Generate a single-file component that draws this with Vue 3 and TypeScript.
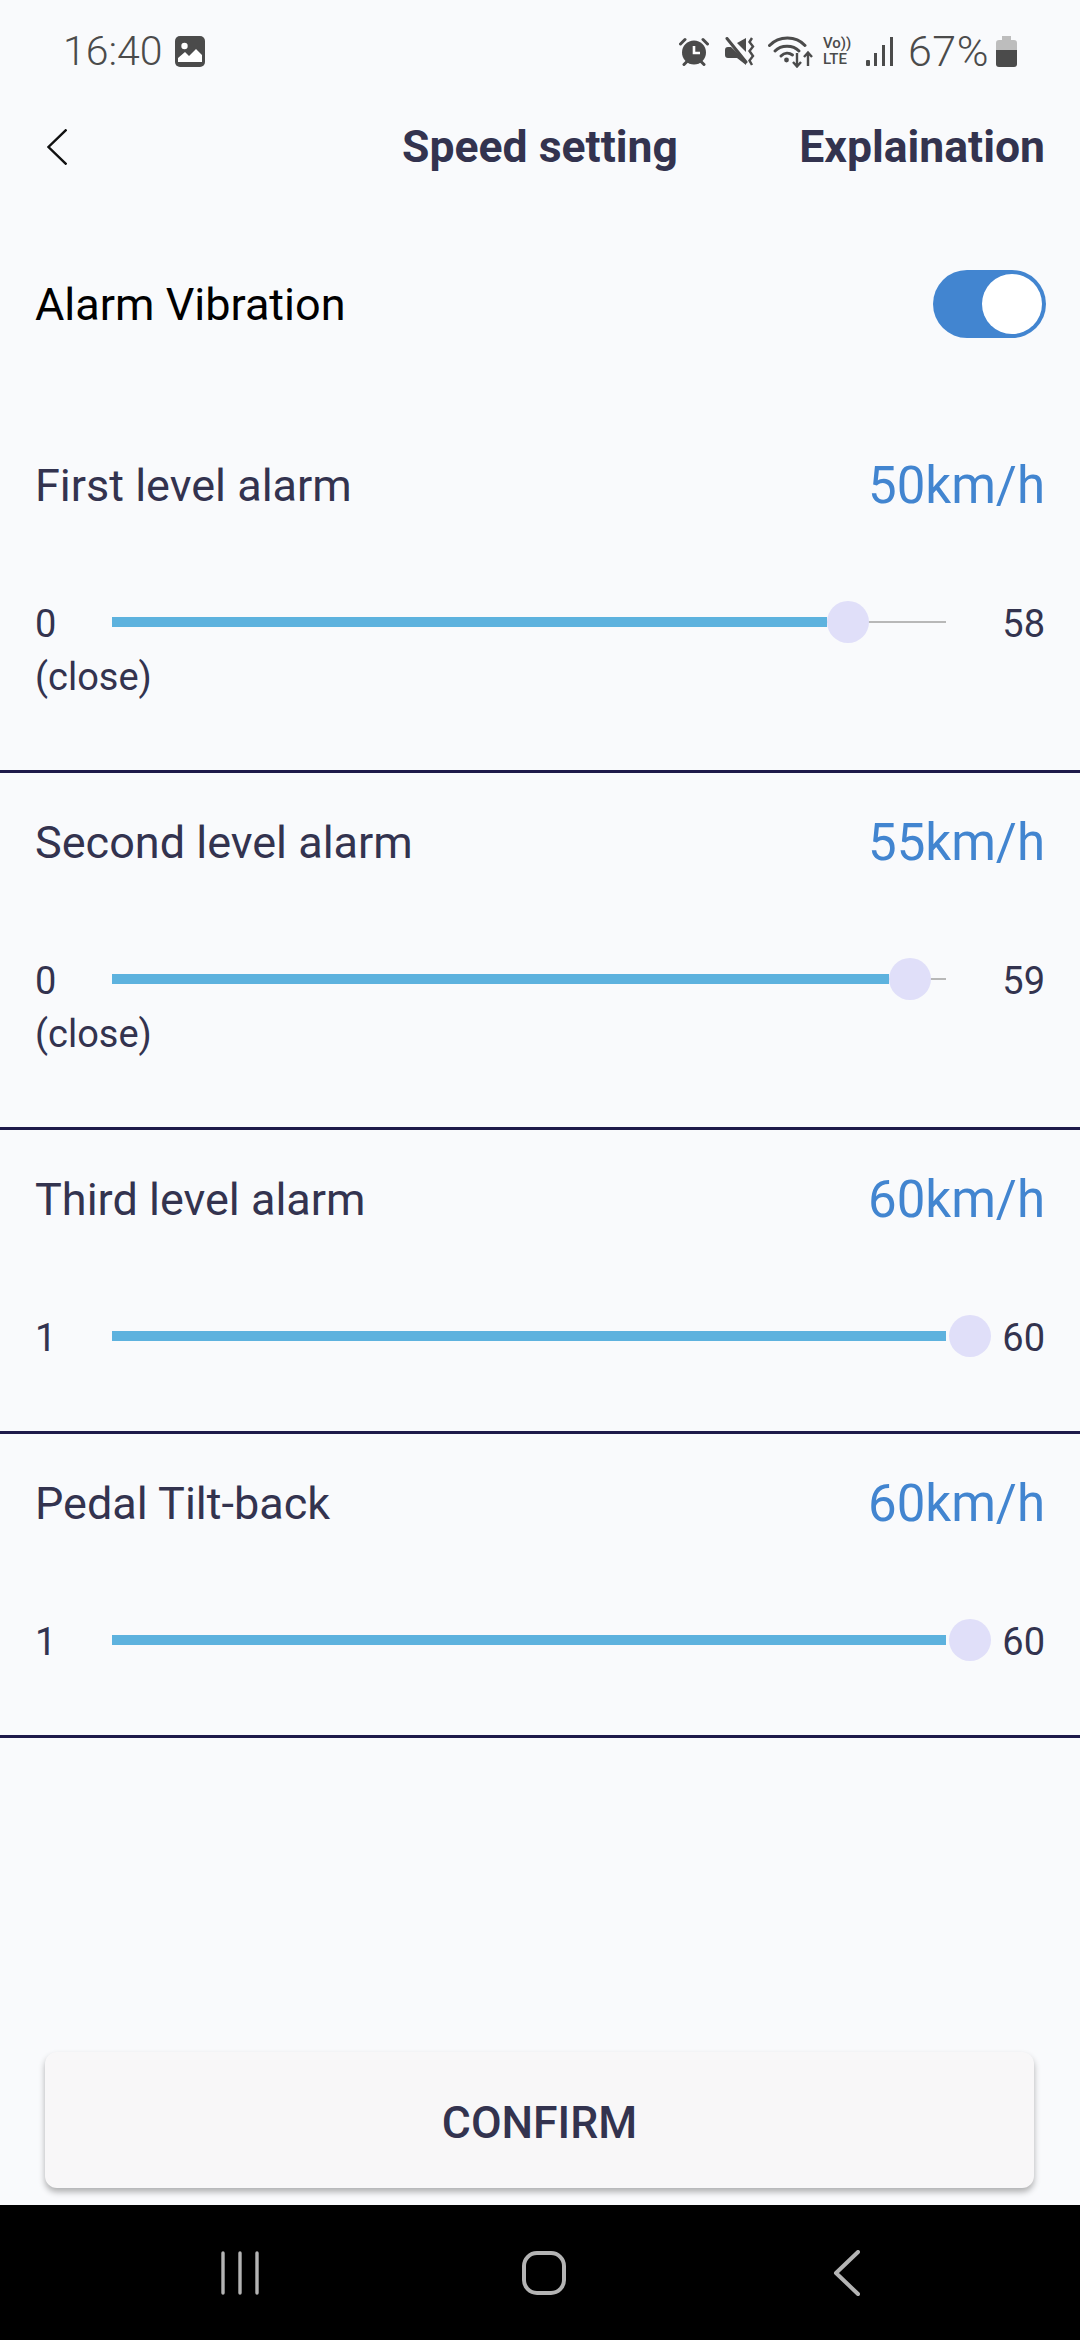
<template>
  <div class="page">
    <div class="status-bar">
      <div class="status-left">
        <span class="clock">16:40</span>
        <svg class="ic-image" width="30" height="31" viewBox="0 0 30 31">
          <rect x="0" y="0" width="30" height="31" rx="5" fill="#4b4b4b" />
          <circle cx="9.5" cy="10" r="3.2" fill="#fff" />
          <path d="M3 26 L3 22 L10 16 L14 20 L21 13 L27 19 L27 26 Z" fill="#fff" />
        </svg>
      </div>
      <div class="status-right">
        <svg width="30" height="29" viewBox="0 0 30 29">
          <circle cx="15" cy="15.5" r="12" fill="#4b4b4b" />
          <path d="M15 9 V16 H21" fill="none" stroke="#fff" stroke-width="2.6" />
          <path d="M1.5 7 L6 2.5 M28.5 7 L24 2.5" stroke="#4b4b4b" stroke-width="3" stroke-linecap="round" />
          <path d="M5 27.5 L8 24.5 M25 27.5 L22 24.5" stroke="#4b4b4b" stroke-width="3" stroke-linecap="round" />
        </svg>
        <svg class="ic-mute" width="30" height="29" viewBox="0 0 30 29">
          <path d="M0 13 Q0 10 3 10 H6 L21 24 V28 L12 21 H3 Q0 21 0 18 Z" fill="#4b4b4b" />
          <path d="M12 6 L21 1 V15 Z" fill="#4b4b4b" />
          <path d="M2 1.5 L21 25" stroke="#4b4b4b" stroke-width="3" stroke-linecap="round" />
          <path d="M27 1 L24.5 5 L28 9.5 L24.5 14 L28 19 L24.5 23.5 L27 28" fill="none" stroke="#4b4b4b" stroke-width="2.4" />
        </svg>
        <svg class="ic-wifi" width="45" height="33" viewBox="0 0 45 33">
          <path d="M1.5 10.5 C11 0.5 28 0.5 37 10.5" fill="none" stroke="#4b4b4b" stroke-width="3" stroke-linecap="round" />
          <path d="M7 16 C13 9.5 25 9.5 31 16" fill="none" stroke="#4b4b4b" stroke-width="3" stroke-linecap="round" />
          <path d="M13 21 C16.5 17.5 21 17.5 24.5 20" fill="none" stroke="#4b4b4b" stroke-width="3" stroke-linecap="round" />
          <circle cx="18.5" cy="25" r="2.4" fill="#4b4b4b" />
          <path d="M29 18 V31 M25 27 L29 31.5 L33 27" fill="none" stroke="#4b4b4b" stroke-width="2.4" />
          <path d="M40 31 V18 M36 22 L40 17.5 L44 22" fill="none" stroke="#4b4b4b" stroke-width="2.4" />
        </svg>
        <div class="volte"><span>Vo))</span><span>LTE</span></div>
        <svg class="ic-signal" width="27" height="29" viewBox="0 0 27 29">
          <rect x="0" y="23" width="4" height="6" rx="1" fill="#4b4b4b" />
          <rect x="8" y="16" width="3" height="13" fill="#4b4b4b" />
          <rect x="16" y="8" width="3" height="21" fill="#4b4b4b" />
          <rect x="24" y="0" width="3" height="29" fill="#4b4b4b" />
        </svg>
        <span class="percent">67%</span>
        <svg class="ic-battery" width="21" height="31" viewBox="0 0 21 31">
          <path d="M6 0 H15 V4 H18 Q21 4 21 7 V14 H0 V7 Q0 4 3 4 H6 Z" fill="#bdbdbd" />
          <path d="M0 14 H21 V28 Q21 31 18 31 H3 Q0 31 0 28 Z" fill="#4b4b4b" />
        </svg>
      </div>
    </div>

    <div class="header">
      <svg class="back" width="20" height="36" viewBox="0 0 20 36">
        <path d="M19.5 0.5 L1.5 18 L19.5 35.5" fill="none" stroke="#111" stroke-width="2.4" />
      </svg>
      <span class="title">Speed setting</span>
      <span class="explain">Explaination</span>
    </div>

    <div class="vibration">
      <span>Alarm Vibration</span>
      <div class="switch"><div class="knob"></div></div>
    </div>

    <div v-for="item in alarms" :key="item.name" class="section">
      <div class="section-head">
        <span class="name">{{ item.name }}</span>
        <span class="value">{{ item.value }}km/h</span>
      </div>
      <div class="slider-row">
        <div class="min-label">
          <div>{{ item.min }}</div>
          <div v-if="item.min === 0">(close)</div>
        </div>
        <div class="track">
          <div class="line"></div>
          <div class="fill" :style="{ width: item.thumb - 21 + 'px' }"></div>
          <div class="thumb" :style="{ left: item.thumb - 21 + 'px' }"></div>
        </div>
        <div class="max-label">{{ item.max }}</div>
      </div>
    </div>

    <div class="spacer"></div>

    <button class="confirm">CONFIRM</button>

    <div class="nav-bar">
      <svg width="38" height="44" viewBox="0 0 38 44">
        <path d="M2 2 V42 M19 2 V42 M36 2 V42" stroke="#b4b4b4" stroke-width="3.4" stroke-linecap="round" />
      </svg>
      <svg width="46" height="46" viewBox="0 0 46 46">
        <rect x="3" y="3" width="40" height="40" rx="13" fill="none" stroke="#b4b4b4" stroke-width="4" />
      </svg>
      <svg width="27" height="46" viewBox="0 0 27 46">
        <path d="M25 2 L3 23 L25 44" fill="none" stroke="#b4b4b4" stroke-width="4" stroke-linecap="round" stroke-linejoin="round" />
      </svg>
    </div>
  </div>
</template>

<script setup lang="ts">
interface Alarm {
  name: string
  value: number
  min: number
  max: number
  thumb: number
}

// thumb = centre of the knob, measured from the left end of the track
const alarms: Alarm[] = [
  { name: 'First level alarm', value: 50, min: 0, max: 58, thumb: 736 },
  { name: 'Second level alarm', value: 55, min: 0, max: 59, thumb: 798 },
  { name: 'Third level alarm', value: 60, min: 1, max: 60, thumb: 858 },
  { name: 'Pedal Tilt-back', value: 60, min: 1, max: 60, thumb: 858 },
]
</script>

<style>
body {
  margin: 0;
  background: #f9fafc;
}
</style>

<style scoped>
.page {
  width: 1080px;
  height: 2340px;
  display: flex;
  flex-direction: column;
  background: #f9fafc;
  font-family: Roboto, sans-serif;
  color: #33334f;
  overflow: hidden;
}

.status-bar {
  height: 102px;
  flex: none;
  display: flex;
  align-items: center;
  justify-content: space-between;
  padding: 0 63px;
  color: #4b4b4b;
}

.status-left,
.status-right {
  display: flex;
  align-items: center;
}

.clock {
  font-size: 41px;
  font-weight: 300;
  width: 112px;
}

.status-right svg {
  flex: none;
}

.ic-mute {
  margin-left: 16px;
}

.ic-wifi {
  margin-left: 13px;
}

.volte {
  margin-left: 10px;
  width: 30px;
  display: flex;
  flex-direction: column;
  font-size: 15px;
  font-weight: 500;
  line-height: 16px;
}

.ic-signal {
  margin-left: 13px;
}

.percent {
  margin-left: 15px;
  width: 79px;
  font-size: 43px;
  font-weight: 300;
  letter-spacing: 0.5px;
  white-space: nowrap;
}

.ic-battery {
  margin-left: 9px;
}

.header {
  height: 90px;
  flex: none;
  display: grid;
  grid-template-columns: 1fr auto 1fr;
  align-items: center;
  padding: 0 35px;
}

.back {
  display: block;
  margin-left: 12px;
}

.title,
.explain {
  font-size: 44.5px;
  font-weight: 700;
}

.explain {
  justify-self: end;
}

.vibration {
  height: 224px;
  flex: none;
  display: flex;
  align-items: center;
  justify-content: space-between;
  padding: 0 34px 0 35px;
  font-size: 45px;
  color: #000;
}

.switch {
  width: 113px;
  height: 68px;
  border-radius: 34px;
  background: #4285d0;
  position: relative;
}

.knob {
  position: absolute;
  top: 4px;
  right: 4px;
  width: 60px;
  height: 60px;
  border-radius: 50%;
  background: #fff;
}

.section {
  flex: none;
  padding: 42px 35px 66px;
  border-bottom: 3px solid #1e1a4a;
}

.section-head {
  display: flex;
  justify-content: space-between;
  align-items: center;
  height: 54px;
  margin-bottom: 86px;
}

.name {
  font-size: 45px;
}

.value {
  font-size: 51px;
  color: #4285d0;
}

.slider-row {
  display: flex;
  font-size: 38px;
  line-height: 53px;
}

.min-label {
  width: 77px;
  flex: none;
  white-space: nowrap;
}

.track {
  width: 834px;
  height: 53px;
  flex: none;
  position: relative;
}

.line {
  position: absolute;
  left: 0;
  right: 0;
  top: 23px;
  height: 2px;
  background: #b8b8b8;
}

.fill {
  position: absolute;
  left: 0;
  top: 19px;
  height: 10px;
  background: #5db2de;
  max-width: 834px;
}

.thumb {
  position: absolute;
  top: 3px;
  width: 42px;
  height: 42px;
  border-radius: 50%;
  background: #e0dff9;
}

.max-label {
  flex: 1;
  text-align: right;
}

.spacer {
  flex: 1;
}

.confirm {
  flex: none;
  display: block;
  width: 989px;
  height: 136px;
  margin: 0 0 17px 45px;
  padding: 5px 0 0;
  border: none;
  border-radius: 12px;
  background: #f8f7f8;
  box-shadow: 0 4px 6px rgba(0, 0, 0, 0.3);
  font-family: Roboto, sans-serif;
  font-size: 44.5px;
  font-weight: 500;
  color: #33334f;
}

.nav-bar {
  height: 135px;
  flex: none;
  background: #000;
  display: grid;
  grid-template-columns: 300px 312px 1fr;
  align-items: center;
  padding-left: 221px;
  box-sizing: border-box;
}

.nav-bar svg {
  display: block;
}
</style>
